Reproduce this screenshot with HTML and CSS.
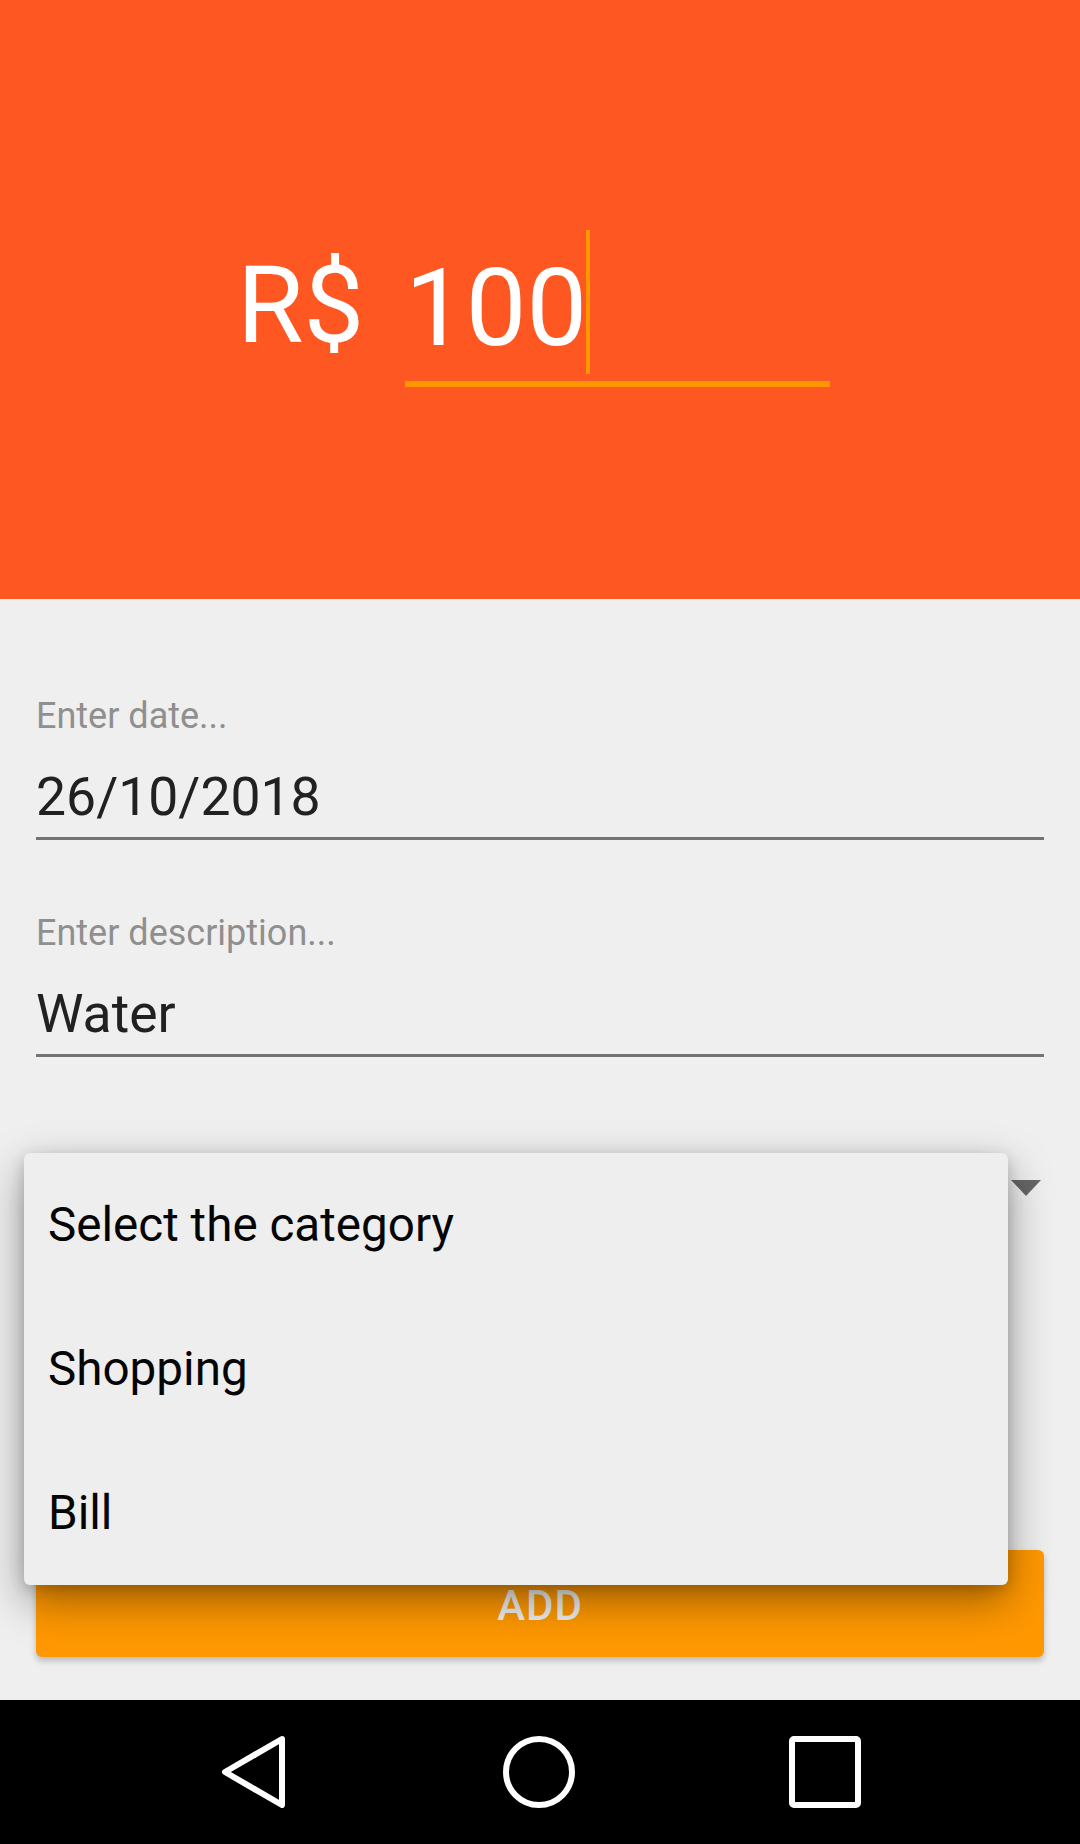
FILE: index.html
```html
<!DOCTYPE html>
<html lang="en">
<head>
<meta charset="utf-8">
<title>Add expense</title>
<link rel="stylesheet" href="styles.css">
</head>
<body>
<div class="app">
  <header class="header">
    <div class="amount-row">
      <span class="currency">R$</span>
      <div class="amount-field"><span class="amount-text">100</span><span class="caret"></span></div>
    </div>
  </header>
  <main class="form">
    <div class="field">
      <div class="label">Enter date...</div>
      <div class="input">26/10/2018</div>
    </div>
    <div class="field field-second">
      <div class="label">Enter description...</div>
      <div class="input">Water</div>
    </div>
    <div class="spinner">
      <svg class="spinner-arrow" width="30" height="16" viewBox="0 0 30 16"><polygon points="0,0 30,0 15,16" fill="#666666"/></svg>
    </div>
    <button class="add-btn">ADD</button>
    <div class="popup">
      <div class="popup-item">Select the category</div>
      <div class="popup-item">Shopping</div>
      <div class="popup-item">Bill</div>
    </div>
  </main>
  <nav class="navbar">
    <svg class="nav-icon" width="72" height="72" viewBox="0 0 72 72"><polygon points="65,3 8,36 65,69" fill="none" stroke="#fff" stroke-width="6" stroke-linejoin="round"/></svg>
    <svg class="nav-icon" width="72" height="72" viewBox="0 0 72 72"><circle cx="36" cy="36" r="33" fill="none" stroke="#fff" stroke-width="6"/></svg>
    <svg class="nav-icon" width="72" height="72" viewBox="0 0 72 72"><rect x="3" y="3" width="66" height="66" rx="2" fill="none" stroke="#fff" stroke-width="6"/></svg>
  </nav>
</div>
</body>
</html>
```
FILE: styles.css
```css
* { box-sizing: border-box; }
html, body { margin: 0; padding: 0; }
body {
  background: #efefef;
  font-family: Roboto, "Noto Sans", "Liberation Sans", sans-serif;
}
.app {
  width: 1080px;
  height: 1844px;
  display: flex;
  flex-direction: column;
  overflow: hidden;
}
.header {
  height: 599px;
  flex: 0 0 599px;
  background: #ff5722;
  padding-top: 254px;
}
.amount-row {
  display: flex;
  align-items: flex-start;
  padding-left: 237px;
}
.currency {
  width: 168px;
  font-size: 108px;
  line-height: 108px;
  color: #ffffff;
  margin-top: -3px;
}
.amount-field {
  width: 425px;
  font-size: 108px;
  line-height: 108px;
  color: #ffffff;
  padding-bottom: 19px;
  border-bottom: 6px solid #ff9800;
  white-space: nowrap;
}
.caret {
  display: inline-block;
  width: 4px;
  height: 144px;
  background: #ff9800;
  margin-left: -1px;
  margin-top: -40px;
  margin-bottom: -40px;
  vertical-align: 11px;
}
.form {
  flex: 1 1 auto;
  position: relative;
  padding: 96px 36px 0 36px;
  display: flex;
  flex-direction: column;
}
.field-second { margin-top: 72px; }
.label {
  font-size: 36px;
  line-height: 42px;
  color: #8f8f8f;
}
.input {
  margin-top: 28px;
  font-size: 53.5px;
  line-height: 64px;
  color: #212121;
  padding-bottom: 8px;
  border-bottom: 3px solid #737373;
}
.spinner {
  margin-top: 59px;
  height: 144px;
  display: flex;
  align-items: center;
  justify-content: flex-end;
  padding-right: 3px;
}
.spinner-arrow { display: block; }
.add-btn {
  margin-top: 290px;
  height: 107px;
  border: none;
  border-radius: 6px;
  background: #ff9800;
  color: #efefef;
  font-family: Roboto, "Noto Sans", "Liberation Sans", sans-serif;
  font-size: 42px;
  font-weight: 500;
  letter-spacing: 1px;
  padding: 4px 0 0 0;
  box-shadow: 0 4px 6px rgba(0,0,0,0.22);
}
.popup {
  position: absolute;
  left: 24px;
  top: 554px;
  width: 984px;
  height: 432px;
  background: #eeeeee;
  border-radius: 6px;
  box-shadow: 0 16px 44px rgba(0,0,0,0.38), 0 4px 14px rgba(0,0,0,0.16);
  display: flex;
  flex-direction: column;
}
.popup-item {
  height: 144px;
  display: flex;
  align-items: center;
  padding-left: 24px;
  font-size: 47.6px;
  color: #050505;
}
.navbar {
  flex: 0 0 144px;
  height: 144px;
  background: #000000;
  display: flex;
  align-items: center;
  padding-left: 217px;
  gap: 214px;
}
.nav-icon { display: block; }
```
